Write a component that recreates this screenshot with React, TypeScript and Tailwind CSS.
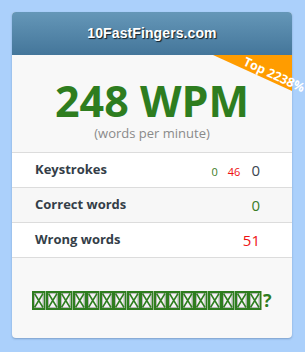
const rows = [
  { label: 'Keystrokes', bg: 'bg-white' },
  { label: 'Correct words', bg: 'bg-[#f7f7f7]' },
  { label: 'Wrong words', bg: 'bg-white' },
];

function Tofu() {
  return (
    <svg width="13.5" height="19" viewBox="0 0 13.5 19" className="inline-block align-middle">
      <rect x="1" y="1" width="11.5" height="17" fill="#f2f2f2" stroke="#2e7d1f" strokeWidth="2" />
      <rect x="2.5" y="2.5" width="8.5" height="14" fill="none" stroke="#b8b8b8" strokeWidth="1" />
      <path d="M2.5 2.5 L11 16.5 M11 2.5 L2.5 16.5" stroke="#2e7d1f" strokeWidth="1.5" />
    </svg>
  );
}

function RowValue({ index }: { index: number }) {
  if (index === 0) {
    return (
      <div className="flex items-baseline gap-[10px]">
        <span className="text-[11px] text-[#3a7d26]">0</span>
        <span className="text-[11px] text-[#ee1111]">46</span>
        <span className="text-[15px] text-[#3b4650] ml-[1px]">0</span>
      </div>
    );
  }
  if (index === 1) return <span className="text-[15px] text-[#3a7d26]">0</span>;
  return <span className="text-[15px] text-[#ee1111]">51</span>;
}

export default function App() {
  return (
    <div className="min-h-[352px] bg-[#abd0fb] pt-[12px] pl-[12px] font-['Open_Sans',sans-serif]">
      <div className="w-[280px] rounded-[4px] bg-[#f8f8f8] shadow-[0_1px_2px_rgba(40,70,110,0.35)]">
        {/* header */}
        <div className="h-[43px] rounded-t-[4px] bg-gradient-to-b from-[#6597b8] to-[#44769a] flex items-center justify-center">
          <span className="font-['Liberation_Sans',sans-serif] font-bold text-[14px] tracking-[0.1px] text-white [text-shadow:1px_1px_1px_rgba(0,0,0,0.8)]">
            10FastFingers.com
          </span>
        </div>

        {/* body */}
        <div className="relative">
          <svg width="79" height="36" viewBox="0 0 79 36" className="absolute top-0 right-0">
            <polygon points="0,0 79,0 79,36" fill="#ff9c00" />
          </svg>
          <span className="absolute top-[11px] right-[-22px] w-[80px] h-[18px] leading-[18px] text-center whitespace-nowrap text-[12.5px] font-bold text-white rotate-[25deg]">
            Top 2238%
          </span>

          <div className="pt-[24px] text-center text-[43px] leading-[43px] font-bold text-[#2e7d1f]">
            248 WPM
          </div>
          <div className="pt-[2px] pb-[10px] text-center text-[13px] leading-[18px] text-[#8a8a8a]">
            (words per minute)
          </div>

          <div className="border-t border-[#dcdcdc]">
            {rows.map((row, i) => (
              <div
                key={row.label}
                className={`h-[35px] border-b border-[#dcdcdc] ${row.bg} flex items-center justify-between pl-[23px] pr-[32px]`}
              >
                <span className="text-[13px] font-bold text-[#343e48]">{row.label}</span>
                <RowValue index={i} />
              </div>
            ))}
          </div>

          <div className="h-[80px] flex items-center justify-center pt-[4px]">
            <span className="flex items-center text-[18px] font-bold text-[#2e7d1f]">
              {Array.from({ length: 17 }).map((_, i) => (
                <Tofu key={i} />
              ))}
              <span className="ml-[1px] leading-[19px]">?</span>
            </span>
          </div>
        </div>
      </div>
    </div>
  );
}
